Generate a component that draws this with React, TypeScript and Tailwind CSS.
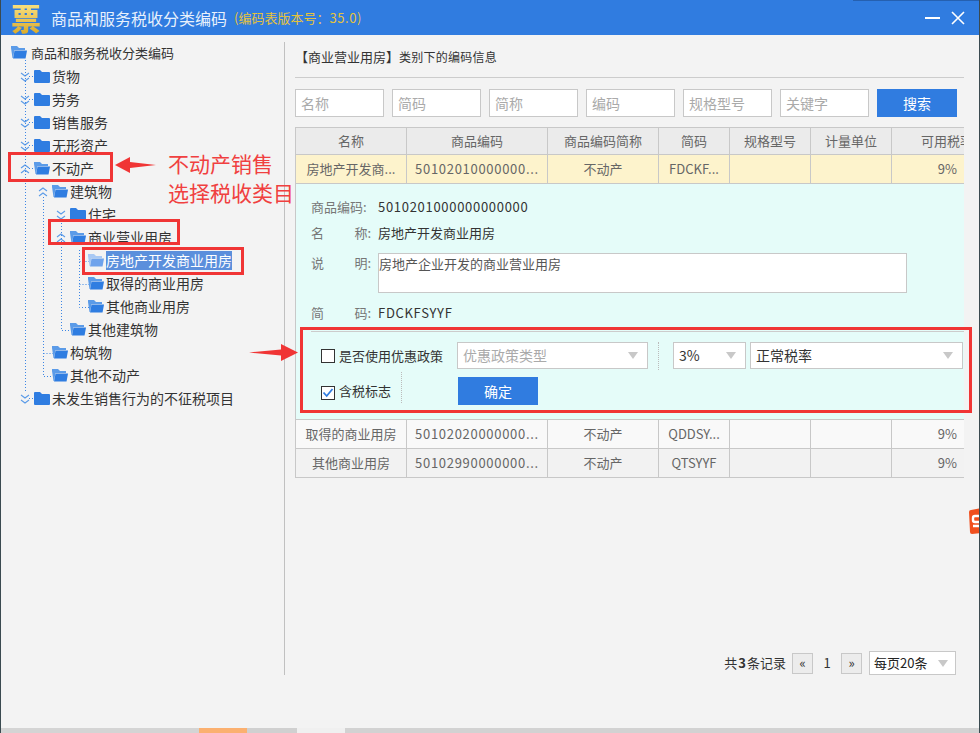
const FONT = "font-['Noto_Sans_CJK_SC','Open_Sans',sans-serif]";

type TreeNode = {
  label: string;
  pad: string;
  toggle?: "down" | "up";
  open?: boolean;
  selected?: boolean;
};

const treeNodes: TreeNode[] = [
  { label: "货物", pad: "pl-[19px]", toggle: "down" },
  { label: "劳务", pad: "pl-[19px]", toggle: "down" },
  { label: "销售服务", pad: "pl-[19px]", toggle: "down" },
  { label: "无形资产", pad: "pl-[19px]", toggle: "down" },
  { label: "不动产", pad: "pl-[19px]", toggle: "up", open: true },
  { label: "建筑物", pad: "pl-[37px]", toggle: "up", open: true },
  { label: "住宅", pad: "pl-[55px]", toggle: "down" },
  { label: "商业营业用房", pad: "pl-[55px]", toggle: "up", open: true },
  { label: "房地产开发商业用房", pad: "pl-[87px]", open: true, selected: true },
  { label: "取得的商业用房", pad: "pl-[87px]", open: true },
  { label: "其他商业用房", pad: "pl-[87px]", open: true },
  { label: "其他建筑物", pad: "pl-[69px]", open: true },
  { label: "构筑物", pad: "pl-[51px]", open: true },
  { label: "其他不动产", pad: "pl-[51px]", open: true },
  { label: "未发生销售行为的不征税项目", pad: "pl-[19px]", toggle: "down" },
];

const columns = [
  { name: "名称", w: "w-[111px]" },
  { name: "商品编码", w: "w-[141px]" },
  { name: "商品编码简称", w: "w-[111px]" },
  { name: "简码", w: "w-[71px]" },
  { name: "规格型号", w: "w-[81px]" },
  { name: "计量单位", w: "w-[81px]" },
];

function FolderIcon({ open, light }: { open?: boolean; light?: boolean }) {
  const main = light ? "#6fa3ec" : "#2f7de1";
  if (open) {
    return (
      <svg width="16" height="13" viewBox="0 0 16 13" className="shrink-0">
        <path d="M0 0h6l2 2h6v2H3.5L2 12H1.5L0 2z" fill={light ? "#a9c9f4" : "#5b9be8"} />
        <path d="M3.5 4.5H16l-1.5 8H2z" fill={main} />
      </svg>
    );
  }
  return (
    <svg width="16" height="13" viewBox="0 0 16 13" className="shrink-0">
      <path d="M0 1q0-1 1-1h5l2 2h7q1 0 1 1v9q0 1-1 1H1q-1 0-1-1z" fill={main} />
    </svg>
  );
}

function Toggle({ dir }: { dir: "down" | "up" }) {
  const d =
    dir === "down"
      ? "M1 1l4 3 4-3M1 6l4 3 4-3"
      : "M1 4l4-3 4 3M1 9l4-3 4 3";
  return (
    <svg width="10" height="10" viewBox="0 0 10 10" className="shrink-0">
      <path d={d} fill="none" stroke="#5b9be8" strokeWidth="1.1" />
    </svg>
  );
}

function TreeRow({ node }: { node: TreeNode }) {
  return (
    <div className={`flex h-[23px] items-center text-[14px] ${node.pad}`}>
      {node.toggle && (
        <span className="mr-[4px] flex w-[10px] justify-center">
          <Toggle dir={node.toggle} />
        </span>
      )}
      <FolderIcon open={node.open} light={node.selected} />
      <span
        className={
          node.selected
            ? "ml-[2px] bg-[#5b8fdc] text-white leading-[19px]"
            : "ml-[2px] text-[#333]"
        }
      >
        {node.label}
      </span>
    </div>
  );
}

function TreeLines() {
  const level1 = [77, 100, 123, 146, 169, 399];
  const d = [
    "M24.5 60V392",
    ...level1.map((y) => `M28 ${y - 0.5}H34`),
    "M42.5 197V376.5H52",
    "M42.5 353.5H52",
    "M60.5 220V330.5H70",
    "M78.5 250V307.5H88",
    "M78.5 261.5H88",
    "M78.5 284.5H88",
  ].join(" ");
  return (
    <svg width="100" height="410" className="pointer-events-none absolute left-0 top-[-42px]">
      <path d={d} fill="none" stroke="#3d86e4" strokeWidth="1" strokeDasharray="1 2" />
    </svg>
  );
}

function SelectBox({ text, muted, w }: { text: string; muted?: boolean; w: string }) {
  return (
    <div className={`flex h-[27px] ${w} items-center justify-between border border-[#c8c8c8] bg-white pl-[5px] pr-[9px]`}>
      <span className={muted ? "text-[#aaa] text-[14px]" : "text-[#333] text-[14px]"}>{text}</span>
      <span className="h-0 w-0 border-x-[5px] border-t-[7px] border-x-transparent border-t-[#c8c8c8]" />
    </div>
  );
}

function CheckBox({ checked }: { checked?: boolean }) {
  return (
    <span className="relative block h-[14px] w-[14px] shrink-0 border border-[#333] bg-white">
      {checked && (
        <svg width="12" height="12" viewBox="0 0 12 12" className="absolute left-0 top-0">
          <path d="M1.5 5.5l3.2 3.5L10.5 2" fill="none" stroke="#2f7de1" strokeWidth="1.8" />
        </svg>
      )}
    </span>
  );
}

function Cell({ w, children, digits }: { w: string; children?: string; digits?: boolean }) {
  return (
    <div
      className={`flex ${w} shrink-0 items-center justify-center whitespace-nowrap border-r border-[#c8c8c8] ${
        digits ? "tracking-[0.7px]" : ""
      }`}
    >
      {children}
    </div>
  );
}

function DataRow({ cells, bg }: { cells: string[]; bg: string }) {
  return (
    <div className={`flex h-[29px] border-b border-[#c8c8c8] text-[13px] text-[#666] ${bg}`}>
      {columns.map((c, i) => (
        <Cell key={c.name} w={c.w} digits={i === 1}>
          {cells[i]}
        </Cell>
      ))}
      <div className="flex flex-1 items-center justify-end pr-[7px]">{cells[6]}</div>
    </div>
  );
}

function DetailLine({ label, value, mono }: { label: string[]; value: string; mono?: boolean }) {
  return (
    <div className="flex h-[26px] items-center">
      <span className="flex w-[60px] justify-between text-[#777]">
        {label.map((l) => (
          <span key={l}>{l}</span>
        ))}
      </span>
      <span className={mono ? "ml-[7px] text-[#333] tracking-[0.7px]" : "ml-[7px] text-[#333]"}>{value}</span>
    </div>
  );
}

export default function App() {
  return (
    <div className={`${FONT} relative flex h-[733px] w-[980px] flex-col overflow-hidden border-x border-x-[#3a4a50] bg-[#f3f3f3] text-[13px]`}>
      {/* title bar */}
      <header className="relative flex h-[35px] shrink-0 items-center bg-[#307ce0] text-white">
        <span className="absolute right-0 top-0 h-px w-[126px] bg-[#2560b0]" />
        <span className="ml-[10px] w-[32px] bg-gradient-to-b from-[#fbe88a] to-[#dba91c] bg-clip-text text-[30px] font-black leading-[35px] text-transparent">
          票
        </span>
        <span className="ml-[8px] text-[16px] text-[#e8f1fc]">商品和服务税收分类编码</span>
        <span className="ml-[7px] text-[13px] text-[#e5c23c]">
          (编码表版本号{"\uFF1A"}<span className="tracking-[0.6px]">35.0</span>)
        </span>
        <div className="ml-auto mr-[14px] flex items-center gap-[11px]">
          <span className="block h-[2px] w-[15px] bg-white" />
          <svg width="14" height="14" viewBox="0 0 14 14">
            <path d="M1 1l12 12M13 1L1 13" stroke="#fff" strokeWidth="1.6" />
          </svg>
        </div>
      </header>

      <main className="flex min-h-0 flex-1">
        {/* tree */}
        <aside className="relative mt-[7px] mb-[53px] w-[284px] shrink-0 border-r border-[#c0c0c0]">
          <TreeLines />
          <div className="flex h-[23px] items-center pb-[2px] pl-[10px]">
            <FolderIcon open />
            <span className="ml-[4px] text-[#333]">商品和服务税收分类编码</span>
          </div>
          {treeNodes.map((n) => (
            <TreeRow key={n.label} node={n} />
          ))}
        </aside>

        {/* right panel */}
        <section className="ml-[10px] flex w-[669px] flex-col">
          <div className="mt-[7px] flex h-[36px] shrink-0 items-center border-b border-[#ccc] pb-[5px] text-[#333]">
            【商业营业用房】<span className="text-[12px] tracking-[0.25px]">类别下的编码信息</span>
          </div>

          <div className="mt-[11px] flex gap-[8px]">
            {["名称", "简码", "简称", "编码", "规格型号", "关键字"].map((p) => (
              <div
                key={p}
                className="flex h-[28px] w-[89px] items-center border border-[#c8c8c8] bg-white pl-[5px] text-[14px] text-[#aaa]"
              >
                {p}
              </div>
            ))}
            <button className="h-[28px] w-[80px] bg-[#307ce0] text-[14px] text-white">搜索</button>
          </div>

          <div className="mt-[10px] overflow-hidden">
            <div className="flex h-[28px] border-y border-l border-[#c8c8c8] bg-[#ebebeb] text-[13px] text-[#666]">
              {columns.map((c) => (
                <Cell key={c.name} w={c.w}>
                  {c.name}
                </Cell>
              ))}
              <div className="flex flex-1 items-center whitespace-nowrap pl-[29px]">可用税率</div>
            </div>
            <div className="border-l border-[#c8c8c8]">
              <DataRow
                bg="bg-[#fdf3cc]"
                cells={["房地产开发商...", "50102010000000...", "不动产", "FDCKF...", "", "", "9%"]}
              />
              <div className="h-[235px] bg-[#e5fcf9] pl-[15px] pt-[10px]">
                <DetailLine label={["商品编码:"]} value="5010201000000000000" mono />
                <DetailLine label={["名", "称:"]} value="房地产开发商业用房" />
                <div className="mt-[7px] flex h-[40px]">
                  <span className="flex w-[60px] justify-between text-[#777]">
                    <span>说</span>
                    <span>明:</span>
                  </span>
                  <div className="ml-[7px] h-[40px] w-[529px] border border-[#c8c8c8] bg-white leading-[20px] text-[#555]">
                    房地产企业开发的商业营业用房
                  </div>
                </div>
                <div className="mt-[7px]">
                  <DetailLine label={["简", "码:"]} value="FDCKFSYYF" mono />
                </div>
                <div className="mt-[5px] border-t border-[#ccc] pl-[10px]">
                  <div className="mt-[10px] flex h-[27px] items-center">
                    <CheckBox />
                    <span className="ml-[4px] w-[118px] text-[#333]">是否使用优惠政策</span>
                    <SelectBox text="优惠政策类型" muted w="w-[191px]" />
                    <span className="mx-[10px] h-[28px] border-l border-dotted border-[#bbb]" />
                    <span className="ml-[4px] mr-[4px]">
                      <SelectBox text="3%" w="w-[73px]" />
                    </span>
                    <SelectBox text="正常税率" w="w-[213px]" />
                  </div>
                  <div className="mt-[8px] flex h-[28px] items-start">
                    <div className="mt-[4px] flex h-[23px] items-center">
                      <CheckBox checked />
                      <span className="ml-[4px] pb-[3px] text-[#333]">含税标志</span>
                    </div>
                    <span className="-mt-[5px] ml-[10px] h-[31px] border-l border-dotted border-[#bbb]" />
                    <button className="ml-[56px] h-[28px] w-[80px] bg-[#307ce0] text-[14px] text-white">确定</button>
                  </div>
                </div>
              </div>
              <div className="border-t border-[#c8c8c8]">
                <DataRow
                  bg="bg-[#f9f9f9]"
                  cells={["取得的商业用房", "50102020000000...", "不动产", "QDDSY...", "", "", "9%"]}
                />
                <DataRow
                  bg="bg-[#f2f2f2]"
                  cells={["其他商业用房", "50102990000000...", "不动产", "QTSYYF", "", "", "9%"]}
                />
              </div>
            </div>
          </div>

          {/* pagination */}
          <div className="mt-auto mb-[53px] flex items-center justify-end pr-[8px] text-[#333]">
            <span>
              共<b className="mx-[1px]">3</b>条记录
            </span>
            <span className="ml-[6px] flex h-[21px] w-[21px] items-center justify-center border border-[#c8c8c8] bg-[#ececec] text-[13px]">«</span>
            <span className="w-[28px] text-center">1</span>
            <span className="flex h-[21px] w-[21px] items-center justify-center border border-[#c8c8c8] bg-[#ececec] text-[13px]">»</span>
            <span className="ml-[7px] flex h-[24px] w-[87px] items-center justify-between border border-[#c8c8c8] bg-white pl-[4px] pr-[7px] text-[13px] text-[#222]">
              每页20条
              <span className="h-0 w-0 border-x-[5px] border-t-[7px] border-x-transparent border-t-[#c8c8c8]" />
            </span>
          </div>
        </section>
      </main>

      {/* taskbar strip */}
      <footer className="-mx-px flex h-[5px] shrink-0">
        <div className="w-[199px] bg-[#d4d4d4]" />
        <div className="w-[48px] bg-[#fbb070]" />
        <div className="w-[50px] bg-[#d0d0d0]" />
        <div className="w-[48px] bg-[#f0f0f0]" />
        <div className="flex-1 bg-[#d2d2d2]" />
      </footer>

      {/* annotations drawn over the screenshot */}
      <div className="absolute left-[7px] top-[152px] h-[30px] w-[105px] border-[3px] border-[#f03535]" />
      <div className="absolute left-[47px] top-[219px] h-[26px] w-[132px] border-[3px] border-[#f03535]" />
      <div className="absolute left-[81px] top-[247px] h-[28px] w-[162px] border-[3px] border-[#f03535]" />
      <div className="absolute left-[299px] top-[327px] h-[86px] w-[672px] border-[3px] border-[#f03535]" />

      <svg width="42" height="18" viewBox="0 0 42 18" className="absolute left-[114px] top-[156px]">
        <path d="M0 9L15 1v5l26 3-26 3v5z" fill="#f03535" />
      </svg>
      <svg width="50" height="18" viewBox="0 0 50 18" className="absolute left-[248px] top-[344px]">
        <path d="M49 8.5L32 0v5.5L0 8.5l32 3V17z" fill="#f03535" />
      </svg>
      <div className="absolute left-[167px] top-[149px] text-[21px] leading-[29px] text-[#f04040]">不动产销售</div>
      <div className="absolute left-[167px] top-[178px] text-[21px] leading-[29px] text-[#f04040]">选择税收类目</div>

      {/* ime floating badge */}
      <svg width="14" height="26" viewBox="0 0 14 26" className="absolute left-[966px] top-[508px]">
        <path d="M2 4q0-2 2-2l10-2v25L5 26q-2 0-2-2z" fill="#f0501e" />
        <path d="M14 8H8q-2 0-2 2v2q0 2 2 2h6M6 18h8" fill="none" stroke="#fff" strokeWidth="2.4" />
      </svg>
    </div>
  );
}
